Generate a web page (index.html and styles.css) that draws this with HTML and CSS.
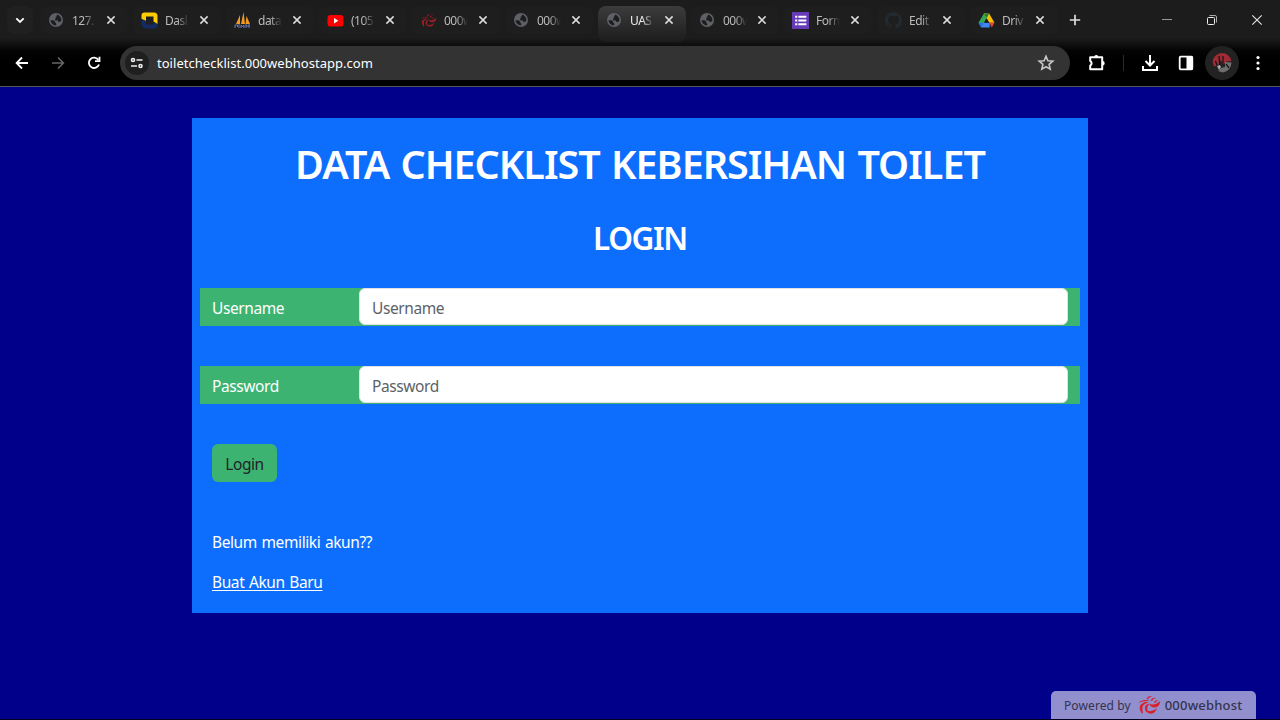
FILE: index.html
```html
<!DOCTYPE html>
<html lang="id">
<head>
<meta charset="utf-8">
<title>UAS</title>
<link rel="stylesheet" href="styles.css">
</head>
<body>
<svg width="0" height="0" class="defs">
  <symbol id="globe" viewBox="0 0 14 14"><circle cx="7" cy="7" r="7" fill="#5d6165"/><path d="M1.5 7.200H4.500L6.200 8.500V9.500L7.200 10.500V12.400A5.500 5.500 0 0 1 1.500 7.200zM7.800 1.600A5.500 5.500 0 0 1 12.400 7.500L11 9H9.500L8.800 7.500H6.500L5.800 6L7.300 5L6.300 4L7.800 3.200z" fill="#1d1d1d"/></symbol>
  <symbol id="close" viewBox="0 0 10 10"><path d="M1.4 1.4L8.6 8.6M8.6 1.4L1.4 8.6" stroke="currentColor" stroke-width="1.5" fill="none"/></symbol>
  <symbol id="swirl" viewBox="0 0 24 20"><g fill="#dc2029"><path d="M1 8Q6 3.500 13 6Q7 5.500 1 8z"/><path d="M4.500 18Q0 11 6 8Q9 6.500 12 7.500Q6 8.500 5.500 12Q5 15 6 18.500z"/><path d="M9.500 17.500Q6.500 13 9 10Q10 9 12.500 9Q9.500 11 10.500 16z"/><path d="M12 8.500Q17 11.500 23.300 6Q22.500 13 16.500 12.500Q13.500 12 12 8.500z"/><path d="M9.500 15.500Q15 18 20 13Q18 19.500 12.500 18.500Q10.500 18 9.500 15.500z"/><path d="M9.500 4Q11 0 15.500 1.500Q12 1.500 11 4.500zM13.500 5.500Q15 2 19 3Q16 3.500 15 6zM17 7.500Q18 4.500 21.500 5.500Q19 6 18 8z"/></g></symbol>
</svg>
<header class="browser">
  <div class="tabstrip">
    <button class="search"><svg width="10" height="7" viewBox="0 0 10 7"><path d="M1.3 1.3L5 5L8.7 1.3" fill="none" stroke="#fff" stroke-width="1.8"/></svg></button>
    <div class="tab"><svg class="fav"><use href="#globe"/></svg><span>127.</span><svg class="x"><use href="#close"/></svg></div>
    <div class="tab"><svg class="fav wide" viewBox="0 0 17 17"><path d="M.5 7V3.500Q.5 .5 3.500 .5H13Q16.500 .5 16.500 4V12L12.500 9.500V4.500H5V9z" fill="#fc0"/><path d="M.5 7L5 9V12.500H12.500V9.500L16.500 12.500V13Q16.500 16.500 13 16.500H5Q1.500 16.500 .5 12z" fill="#152a63"/></svg><span>Dasl</span><svg class="x"><use href="#close"/></svg></div>
    <div class="tab"><svg class="fav wide" viewBox="0 0 17 17"><path d="M2 12L6 3L6 12zM7 12L9.5 0L11 12zM11.5 12L12.5 4L16 12z" fill="#f29a25"/><path d="M1 16V13H3.5V15M5 16V12M7 16V13L8.5 15L10 13V16M12 16V12M12 14H16M15 12V16" stroke="#6c78af" fill="none"/></svg><span>data</span><svg class="x"><use href="#close"/></svg></div>
    <div class="tab"><svg class="fav wide" viewBox="0 0 17 17"><rect x=".5" y="3" width="16" height="11.5" rx="3" fill="#f00"/><path d="M7 6V11.4L11.4 8.7z" fill="#fff"/></svg><span>(105</span><svg class="x"><use href="#close"/></svg></div>
    <div class="tab"><svg class="fav wide dim"><use href="#swirl"/></svg><span>000w</span><svg class="x"><use href="#close"/></svg></div>
    <div class="tab"><svg class="fav"><use href="#globe"/></svg><span>000w</span><svg class="x"><use href="#close"/></svg></div>
    <div class="tab active"><svg class="fav"><use href="#globe"/></svg><span>UAS</span><svg class="x"><use href="#close"/></svg></div>
    <div class="tab"><svg class="fav"><use href="#globe"/></svg><span>000w</span><svg class="x"><use href="#close"/></svg></div>
    <div class="tab"><svg class="fav wide" viewBox="0 0 16 16"><path fill="#673ab7" d="M0 0H16V16H0z"/><path d="M3 4.5H5M3 8H5M3 11.5H5M6 4.5H13.5M6 8H13.5M6 11.5H13.5" stroke="#fff" stroke-width="2"/></svg><span>Form</span><svg class="x"><use href="#close"/></svg></div>
    <div class="tab"><svg class="fav wide" viewBox="0 0 16 16"><path fill="#24292e" d="M8 0C3.58 0 0 3.58 0 8c0 3.54 2.29 6.53 5.47 7.59.4.07.55-.17.55-.38 0-.19-.01-.82-.01-1.49-2.01.37-2.53-.49-2.69-.94-.09-.23-.48-.94-.82-1.13-.28-.15-.68-.52-.01-.53.63-.01 1.08.58 1.23.82.72 1.21 1.87.87 2.33.66.07-.52.28-.87.51-1.07-1.78-.2-3.64-.89-3.64-3.95 0-.87.31-1.59.82-2.15-.08-.2-.36-1.02.08-2.12 0 0 .67-.21 2.2.82.64-.18 1.32-.27 2-.27s1.36.09 2 .27c1.53-1.04 2.2-.82 2.2-.82.44 1.1.16 1.92.08 2.12.51.56.82 1.27.82 2.15 0 3.07-1.87 3.75-3.65 3.95.29.25.54.73.54 1.48 0 1.07-.01 1.93-.01 2.2 0 .21.15.46.55.38A8 8 0 0 0 16 8c0-4.42-3.58-8-8-8z"/></svg><span>Edit</span><svg class="x near"><use href="#close"/></svg></div>
    <div class="tab"><svg class="fav wide" viewBox="0 0 16 16"><path d="M5.5 1.5H8L10 5L3.2 14.5L.5 10z" fill="#34a853"/><path d="M5.5 1.5H10.5L15.5 10H10.5z" fill="#fbbc04"/><path d="M5.5 1.5H10.5L8 5.8z" fill="#188038"/><path d="M5 10H11V14.5H3z" fill="#4285f4"/><path d="M.5 10H5.2L3 14.5z" fill="#2672e8"/><path d="M10.8 10H15.5L13 14.5z" fill="#ea4335"/><path d="M8 5.8L10.5 10H5.5z" fill="#1c1c1c"/></svg><span>Driv</span><svg class="x near"><use href="#close"/></svg></div>
    <svg class="plus" width="12" height="12"><path d="M6 .8V11.2M.8 6H11.2" stroke="#ddd" stroke-width="1.7"/></svg>
    <div class="winctl">
      <svg width="12" height="12"><path d="M1 5.5H11" stroke="#999"/></svg>
      <svg width="12" height="12" fill="none" stroke="#eee"><rect x="1.5" y="3.5" width="7" height="7" rx="1"/><path d="M3.5 1.5H9Q10.5 1.5 10.5 3V8.5" stroke="#aaa"/></svg>
      <svg width="12" height="12"><path d="M1.3 1.3L10.7 10.7M10.7 1.3L1.3 10.7" stroke="#e8e8e8" stroke-width="1.1"/></svg>
    </div>
  </div>
  <div class="toolbar">
    <nav class="nav">
      <svg width="14" height="14" fill="none" stroke="#fff" stroke-width="1.8"><path d="M13 7H2M7 1.500L1.600 7L7 12.500"/></svg>
      <svg width="14" height="14" fill="none" stroke="#666" stroke-width="1.6"><path d="M1 7H12M7 1.500L12.400 7L7 12.500"/></svg>
      <svg width="14" height="14" fill="none" stroke="#fff" stroke-width="1.8"><path d="M11.200 3.600A5.200 5.200 0 1 0 12 8.500M12.500 .800V5.200H8"/></svg>
    </nav>
    <div class="omnibox">
      <div class="site"><svg width="14" height="12" fill="none" stroke="#eee" stroke-width="1.6"><circle cx="3" cy="3" r="1.5"/><path d="M6.500 3H12.500M1 9H7"/><circle cx="10.5" cy="9" r="1.5"/></svg></div>
      <span class="url">toiletchecklist.000webhostapp.com</span>
      <svg width="18" height="18" class="star" viewBox="0 0 18 18"><path d="M9 2.300L10.900 6.800L15.800 7.200L12.100 10.400L13.200 15.200L9 12.700L4.800 15.200L5.900 10.400L2.200 7.200L7.100 6.800z" fill="none" stroke="#c8c8c8" stroke-width="1.6"/></svg>
    </div>
    <div class="actions">
      <svg width="18" height="18" fill="none" stroke="#fff" stroke-width="2"><path d="M2.200 3.200H14.200V15.200H2.200V11.700Q5 9.300 2.200 6.700z" stroke-linejoin="round"/><path d="M6.200 3A2.100 2.100 0 0 1 10.400 3zM14.500 7A2.200 2.200 0 0 1 14.500 11.400z" fill="#fff" stroke="none"/></svg>
      <i class="sep"></i>
      <svg width="18" height="18" fill="none" stroke="#fff" stroke-width="2"><path d="M9 1V11M4.500 7L9 11.500L13.500 7M2 12V16H16V12"/></svg>
      <svg width="18" height="18" class="panel"><rect x="2.700" y="2.700" width="12.600" height="12.600" rx="1" fill="none" stroke="#fff" stroke-width="1.800"/><path d="M9.500 2H14.500Q16 2 16 3.500V14.500Q16 16 14.500 16H9.500z" fill="#fff"/></svg>
      <div class="avatar"><svg width="20" height="20"><circle cx="10" cy="10" r="10" fill="#252223"/><path d="M1 6.500Q4 0 10 0Q17 0 19.500 8L14 8.500L12 11L8 7L6 13L2 13Q0 10 1 6.500z" fill="#a12b35"/><path d="M13 9L19.500 9.500Q19 18 11 19.500L6 18L9 15L13 14z" fill="#707070"/><path d="M7 3L8 14M11 3L11 10M3.500 8L6 15M14 11L17 15" stroke="#171717" stroke-width="1.3"/><path d="M5 13L8 12L9 14L7 17z" fill="#aaa"/></svg></div>
      <svg width="4" height="16" fill="#fff"><circle cx="2" cy="2.500" r="1.6"/><circle cx="2" cy="8" r="1.6"/><circle cx="2" cy="13.500" r="1.6"/></svg>
    </div>
  </div>
</header>
<main class="page">
  <section class="card">
    <h1>DATA CHECKLIST KEBERSIHAN TOILET</h1>
    <h2>LOGIN</h2>
    <form>
      <div class="row"><label for="user">Username</label><input id="user" placeholder="Username"></div>
      <div class="row"><label for="pass">Password</label><input id="pass" type="password" placeholder="Password"></div>
      <button type="button" class="login">Login</button>
    </form>
    <p class="ask">Belum memiliki akun??</p>
    <p><a href="#">Buat Akun Baru</a></p>
  </section>
  <div class="powered"><span>Powered by</span><svg width="24" height="20"><use href="#swirl"/></svg><b>000webhost</b></div>
</main>
</body>
</html>
```
FILE: styles.css
```css
* { box-sizing: border-box; }
body { margin: 0; width: 1280px; height: 720px; overflow: hidden; background: #00008b; font-family: "Noto Sans", sans-serif; color: #fff; display: flex; flex-direction: column; }
.defs { position: absolute; }
svg { display: block; flex: none; }
button { border: 0; font: inherit; letter-spacing: inherit; }
.browser { height: 87px; background: linear-gradient(#1c1c1c 0 38px, #050505 50px, #000 60px); border-bottom: 1px solid #55555c; flex: none; }
.tabstrip { height: 46px; display: flex; align-items: flex-start; padding-top: 6px; }
.search { width: 26px; height: 28px; margin: 0 7px; padding: 0; border-radius: 8px; background: #202020; display: flex; align-items: center; justify-content: center; }
.tab { width: 88px; height: 28px; margin-right: 5px; padding-left: 9px; display: flex; align-items: center; background: #1e1e1e; border-radius: 8px; font-size: 12px; color: #bbb; flex: none; }
.tab.active { height: 36px; padding-bottom: 8px; background: linear-gradient(#3c3c3c, #1c1c1c); color: #eee; }
.fav { width: 14px; height: 14px; margin-right: 9px; }
.fav.wide { width: 17px; height: 17px; margin: 0 7px 0 -1px; }
.fav.dim { opacity: .65; }
.tab span { width: 24px; overflow: hidden; white-space: nowrap; letter-spacing: -.5px; line-height: 18px; padding-top: 1px; -webkit-mask-image: linear-gradient(90deg, #000 50%, transparent); mask-image: linear-gradient(90deg, #000 50%, transparent); }
.x { width: 10px; height: 10px; margin-left: 10px; color: #ddd; }
.x.near { margin-left: 9px; }
.plus { margin: 8px 0 0 6px; }
.winctl { display: flex; gap: 33px; margin: 8px 17px 0 auto; }
.toolbar { height: 34px; display: flex; align-items: center; }
.nav { width: 120px; padding-left: 15px; display: flex; gap: 22px; }
.omnibox { width: 950px; height: 34px; border-radius: 17px; background: #333; display: flex; align-items: center; padding: 0 15px 0 5px; }
.site { width: 24px; height: 24px; border-radius: 50%; background: #1f1f1f; display: flex; align-items: center; justify-content: center; margin-right: 8px; }
.url { font-size: 13px; line-height: 20px; letter-spacing: .03px; }
.star { margin-left: auto; }
.actions { flex: 1; display: flex; align-items: center; padding-left: 18px; }
.sep { width: 1px; height: 16px; background: #2a2a2a; margin: 0 17px; }
.panel { margin: 0 10px 0 18px; }
.avatar { width: 34px; height: 34px; border-radius: 50%; background: #222; display: flex; align-items: center; justify-content: center; margin-right: 17px; }
.page { flex: 1; position: relative; padding: 30.6px 192px 0; border-bottom: 1px solid #000022; }
.card { height: 495.6px; background: #0d6efd; padding: 22px 8px 0; font-size: 15.5px; line-height: 24px; letter-spacing: -.4px; }
h1, h2 { margin: 0; text-align: center; font-weight: 600; white-space: nowrap; }
h1 { font-size: 39.5px; line-height: 48px; letter-spacing: -1px; word-spacing: 2px; }
h2 { font-size: 31.5px; line-height: 38px; margin-top: 31px; letter-spacing: -1.4px; }
.row { height: 38px; margin-bottom: 40px; padding: 0 12px; display: flex; align-items: flex-start; background: #3cb371; }
form { margin-top: 31.4px; }
.row label { width: 147px; padding-top: 8px; }
.row input { width: 709px; height: 37.5px; padding: 2px 12px 0; border: 1px solid #dee2e6; border-radius: 6px; background: #fff; font: inherit; letter-spacing: inherit; }
input::placeholder { color: #5c6268; opacity: 1; }
.login { display: block; width: 65px; height: 38px; margin-left: 12px; padding: 2px 0 0; border-radius: 6px; background: #3cb371; color: #212529; }
p { margin: 0 12px 16px; word-spacing: 1px; }
.ask { margin-top: 48px; }
a { color: #fff; text-underline-offset: 2px; }
.powered { position: absolute; right: 24px; bottom: 0; width: 205px; height: 28px; border-radius: 5px 5px 0 0; background: #918fce; color: #34344c; display: flex; align-items: center; font-size: 12px; padding-left: 13px; letter-spacing: .1px; }
.powered svg { margin: 0 4px 0 6px; }
.powered b { font-size: 13px; font-weight: 500; letter-spacing: .2px; }
```
